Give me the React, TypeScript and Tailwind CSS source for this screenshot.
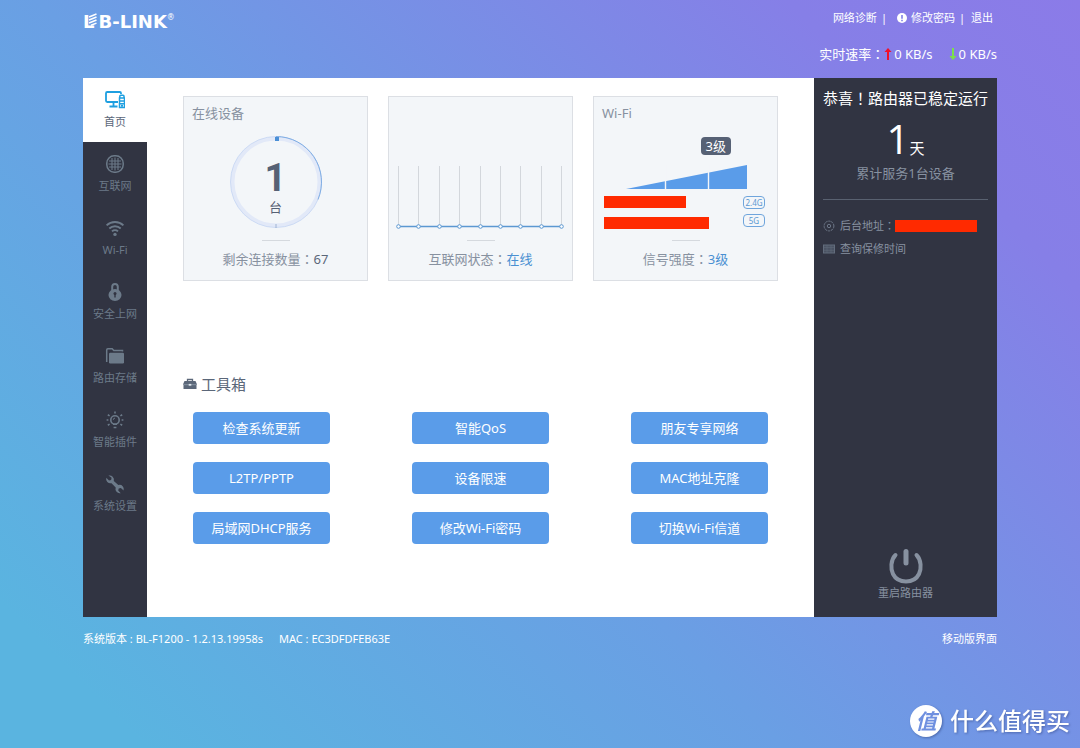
import type { ReactNode } from 'react';

interface NavItem {
  label: string;
  icon: ReactNode;
}

const HomeIcon = () => (
  <svg className="w-5 h-5" viewBox="0 0 20 20" fill="none" stroke="currentColor" strokeWidth="1.8">
    <path d="M13 12H2.200A1.200 1.200 0 0 1 1 10.800V3.200A1.200 1.200 0 0 1 2.200 2h12.600A1.200 1.200 0 0 1 16 3.200V4" />
    <path d="M8.500 12v4M4.500 16.500h8" />
    <path d="M14.800 8V6.300c0-.6.400-1 1-1h2.200c.6 0 1 .4 1 1V8M14.500 8h5v9.500h-5zM14.500 11h5M14.500 13.800h5" strokeWidth="1.500" />
    <path d="M16 15.700h2" strokeWidth="2" />
  </svg>
);

const GlobeIcon = () => (
  <svg className="w-5 h-5" viewBox="0 0 20 20" fill="none" stroke="currentColor">
    <rect x="1.800" y="1.800" width="16.400" height="16.400" rx="7.400" strokeWidth="1.500" />
    <path d="M7 4v12M10 3.500v13M13 4v12M4 7h12M3.500 10h13M4 13h12" strokeWidth="1.100" />
  </svg>
);

const WifiIcon = () => (
  <svg className="w-5 h-5" viewBox="0 0 20 20" fill="none" stroke="currentColor" strokeWidth="1.900">
    <path d="M1.600 7.400a12.200 12.200 0 0 1 16.800 0M4.300 10.500a8.300 8.300 0 0 1 11.400 0M7 13.400a4.400 4.400 0 0 1 6 0" />
    <circle cx="10" cy="16.400" r="1.700" fill="currentColor" stroke="none" />
  </svg>
);

const LockIcon = () => (
  <svg className="w-5 h-5" viewBox="0 0 20 20" fill="none" stroke="currentColor">
    <path d="M7.200 9V4.800a2.800 2.800 0 0 1 5.600 0V9" strokeWidth="2" />
    <ellipse cx="10" cy="13" rx="6.500" ry="6" fill="currentColor" stroke="none" />
    <path d="M10 12v3.600" stroke="#313442" strokeWidth="1.400" />
    <circle cx="10" cy="11.600" r="1.500" fill="#313442" stroke="none" />
  </svg>
);

const FolderIcon = () => (
  <svg className="w-5 h-5" viewBox="0 0 20 20" fill="none" stroke="currentColor">
    <path d="M1.700 16V4c0-.8.500-1.200 1.200-1.200h4.300L8.800 4.500h8.700v1" strokeWidth="1.500" />
    <rect x="4" y="6.700" width="15" height="10.800" rx="1.200" fill="currentColor" stroke="none" />
  </svg>
);

const BulbIcon = () => (
  <svg className="w-5 h-5" viewBox="0 0 20 20" fill="none" stroke="currentColor" strokeWidth="1.600">
    <circle cx="10" cy="10" r="4.200" />
    <path d="M8 14.200h4M8.600 17.500h2.800M10 1.500v2M2.800 4.800l1.800 1.100M17.200 4.800l-1.800 1.100M1.600 10h1.800M16.600 10h1.800M2.800 15.200l1.800-1.100M17.200 15.200l-1.800-1.100" />
    <path d="M8.300 9.800a1.700 1.700 0 0 1 1.700-1.700" strokeWidth="1" />
  </svg>
);

const WrenchIcon = () => (
  <svg className="w-5 h-5" viewBox="0 0 20 20" fill="currentColor">
    <path d="M3.400 1.600a4.300 4.300 0 0 1 5.400 5.300l4.500 4.200a4.200 4.200 0 0 1 5.300 5.400l-2.700-2.600-2.200.5-.5 2.200 2.500 2.600a4.300 4.300 0 0 1-5-5.600L6.500 9.200A4.300 4.300 0 0 1 1.300 3.800L4 6.500l2.100-.6.500-2.100z" />
  </svg>
);

const BriefcaseIcon = () => (
  <svg className="w-3.5 h-3.5" viewBox="0 0 14 14" fill="none">
    <path d="M4.500 4V2.500h5V4" stroke="#5b6779" strokeWidth="1.300" />
    <path d="M1.500 4h11L14 7.500H0z" fill="#5b6779" />
    <rect x=".5" y="7" width="13" height="5" fill="#5b6779" />
    <path d="M1 7.700h12" stroke="#9aa5b4" strokeWidth=".7" />
    <rect x="5.700" y="6.900" width="2.600" height="1.800" fill="#dfe5ec" />
  </svg>
);

const GearIcon = () => (
  <svg className="w-3 h-3" viewBox="0 0 12 12" fill="none" stroke="#6d7788">
    <circle cx="6" cy="6" r="4.900" strokeDasharray="2.400 .7" />
    <circle cx="6" cy="6" r="1.700" />
  </svg>
);

const CalendarIcon = () => (
  <svg className="w-3 h-3" viewBox="0 0 12 12" fill="none" stroke="#626c7c">
    <rect x=".5" y="2" width="11" height="8" fill="#4b5363" />
    <path d="M1 4.500h10M1 7.300h10M4 2v8M8 2v8" strokeWidth=".5" />
  </svg>
);

const PowerIcon = () => (
  <svg className="w-9 h-9" viewBox="0 0 36 36" fill="none" stroke="currentColor" strokeWidth="4" strokeLinecap="round">
    <path d="M18 3.500v11.500" strokeWidth="5" />
    <path d="M7.500 7C2.500 12 2.500 21 5 26s7 7.500 13 7.500 10.500-2.500 13-7.500 2.500-14-2.500-19" />
  </svg>
);

const navItems: NavItem[] = [
  { label: '首页', icon: <HomeIcon /> },
  { label: '互联网', icon: <GlobeIcon /> },
  { label: 'Wi-Fi', icon: <WifiIcon /> },
  { label: '安全上网', icon: <LockIcon /> },
  { label: '路由存储', icon: <FolderIcon /> },
  { label: '智能插件', icon: <BulbIcon /> },
  { label: '系统设置', icon: <WrenchIcon /> },
];

const tools = [
  '检查系统更新', '智能QoS', '朋友专享网络',
  'L2TP/PPTP', '设备限速', 'MAC地址克隆',
  '局域网DHCP服务', '修改Wi-Fi密码', '切换Wi-Fi信道',
];

// x of every sample on the traffic chart
const samples = [10, 30, 51, 71, 92, 112, 132, 153, 173];

// Centred full-width punctuation
const Mark = ({ children }: { children: string }) => (
  <span className="font-['Noto_Sans_CJK_TC',sans-serif]">{children}</span>
);

const Arrow = ({ down }: { down?: boolean }) => (
  <svg className={down ? 'w-2 h-3 rotate-180 text-[#7be04a]' : 'w-2 h-3 text-[#f0102a]'} viewBox="0 0 8 12">
    <path d="M4 0l3.500 4H5v8H3V4H.5z" fill="currentColor" />
  </svg>
);

function Card({ title, footer, children }: { title?: string; footer: ReactNode; children: ReactNode }) {
  return (
    <section className="flex-1 h-[185px] border border-[#dcdfe4] bg-[#f3f6f9]">
      <h2 className="h-8 pl-2 pt-1 text-[13px] leading-6 text-[#8791a0]">{title}</h2>
      <div className="flow-root h-[111px]">{children}</div>
      <div className="w-7 h-px mx-auto bg-[#d5d9de]" />
      <p className="pt-2 text-center text-[13px] leading-5 text-[#8791a0]">{footer}</p>
    </section>
  );
}

function Header() {
  return (
    <header className="flex justify-between h-[78px] text-white">
      <div className="relative flex h-6 mt-2.5 items-center font-['DejaVu_Sans',sans-serif] text-[18px] leading-6 font-bold">
        <span className="pr-1">L</span>
        <svg className="absolute left-[5px] top-0.5 w-2.5 h-4" viewBox="0 0 10 16" fill="none" stroke="#fff" strokeWidth="1.500">
          <path d="M1 5 8.500 2M1 8l7.500-3M1 11l7.500-3M3 13.300l5.500-2.200" />
        </svg>
        <span>B-LINK</span>
        <span className="self-start text-[8px] leading-4 font-normal">®</span>
      </div>
      <div className="flex flex-col items-end pt-2">
        <nav className="flex items-center pr-1 text-[11px] leading-5">
          <a href="#diagnose">网络诊断</a>
          <span className="pl-1">|</span>
          <svg className="w-2.5 h-2.5 ml-2.5 mr-1" viewBox="0 0 10 10">
            <circle cx="5" cy="5" r="5" fill="#fff" />
            <path d="M5 2v3.800M5 6.800v1.400" stroke="#7f80e6" strokeWidth="1.600" />
          </svg>
          <a href="#password">修改密码</a>
          <span className="pl-1 pr-1.5">|</span>
          <a href="#logout">退出</a>
        </nav>
        <div className="flex items-center mt-4 text-[13px] leading-5">
          <span>实时速率<Mark>：</Mark></span>
          <Arrow />
          <span className="ml-0.5 mr-4">0 KB/s</span>
          <Arrow down />
          <span className="ml-0.5">0 KB/s</span>
        </div>
      </div>
    </header>
  );
}

function Sidebar() {
  return (
    <nav className="w-16 shrink-0 bg-[#313442]">
      {navItems.map((item, idx) => (
        <a
          key={item.label}
          href={`#${idx}`}
          className={`flex flex-col items-center h-16 pt-3 text-[11px] leading-4 ${
            idx === 0 ? 'bg-white' : 'text-[#6c7a89]'
          }`}
        >
          <span className={idx === 0 ? 'text-[#1e9fe0]' : ''}>{item.icon}</span>
          <span className={idx === 0 ? 'mt-1 text-[#5b6779]' : 'mt-1'}>{item.label}</span>
        </a>
      ))}
    </nav>
  );
}

function DeviceCard() {
  return (
    <Card title="在线设备" footer={<>剩余连接数量<Mark>：</Mark><span className="text-[#5b6779]">67</span></>}>
      <div className="relative w-24 h-24 mx-auto mt-1 pt-6 text-center text-[#566175]">
        <svg className="absolute inset-0 w-24 h-24" viewBox="0 0 96 96" fill="none">
          <circle cx="48" cy="49" r="43.500" stroke="#e2e9f8" strokeWidth="4" />
          <circle cx="48" cy="49" r="45.500" stroke="#c5d5f2" strokeWidth=".8" />
          <path d="M48 3.500a45.500 45.500 0 0 1 42 63" stroke="#7fade4" strokeWidth="1" />
          <rect x="47" y="4" width="4" height="4" fill="#4a8fd6" />
          <path d="M48 91v4" stroke="#8fa6c9" strokeWidth=".8" />
        </svg>
        <div className="font-['Roboto',sans-serif] text-[38px] leading-[42px] font-bold">1</div>
        <div className="text-[13px] leading-4">台</div>
      </div>
    </Card>
  );
}

function TrafficCard() {
  return (
    <Card footer={<>互联网状态<Mark>：</Mark><span className="text-[#4a90d2]">在线</span></>}>
      <svg className="w-full h-full" viewBox="0 0 183 111" fill="none">
        {samples.map((x) => (
          <path key={x} d={`M${x - 0.5} 37v60`} stroke="#d3d7dc" />
        ))}
        <path d="M10 97.500h163" stroke="#5b98d2" strokeWidth="1.300" />
        {samples.map((x) => (
          <circle key={x} cx={x - 0.5} cy="97.500" r="1.800" fill="#fff" stroke="#5b98d2" />
        ))}
      </svg>
    </Card>
  );
}

function WifiCard() {
  return (
    <Card title="Wi-Fi" footer={<>信号强度<Mark>：</Mark><span className="text-[#4a90d2]">3级</span></>}>
      <div className="flex flex-col pt-2 pl-2.5 pr-3">
        <span className="self-end mr-[34px] px-[5px] rounded bg-[#566175] text-[13px] leading-[18px] text-white">3级</span>
        <svg className="self-end w-[122px] h-6 mt-2.5 mr-[18px]" viewBox="0 0 122 24">
          <path d="M1 24 122 0v24z" fill="#5a9ce9" />
          <path d="M40.500 0v24M83.500 0v24" stroke="#f3f6f9" strokeWidth="1.400" />
        </svg>
        <div className="flex items-center justify-between h-[18px] mt-1">
          <div className="w-[82px] h-3 bg-[#ff2a00]" />
          <span className="w-[22px] rounded border border-[#6fa5dc] text-center text-[8px] leading-[11px] text-[#5b98d2]">2.4G</span>
        </div>
        <div className="flex items-center justify-between h-[18px]">
          <div className="self-end w-[105px] h-3 bg-[#ff2a00]" />
          <span className="w-[22px] rounded border border-[#6fa5dc] text-center text-[8px] leading-[11px] text-[#5b98d2]">5G</span>
        </div>
      </div>
    </Card>
  );
}

function StatusPanel() {
  return (
    <aside className="flex flex-col w-[183px] shrink-0 px-[9px] bg-[#313442] text-[#8791a0]">
      <h2 className="mt-2 text-center whitespace-nowrap text-[15px] leading-6 text-white">
        恭喜<Mark>！</Mark>路由器已稳定运行
      </h2>
      <p className="flex items-baseline justify-center mt-2 text-white">
        <span className="font-['Open_Sans',sans-serif] text-[40px] leading-[42px]">1</span>
        <span className="text-[15px] leading-4">天</span>
      </p>
      <p className="mt-px text-center text-[13px] leading-6">累计服务1台设备</p>
      <hr className="mt-3.5 border-[#596170]" />
      <ul className="mt-3.5 text-[11px] leading-[23px]">
        <li className="flex items-center">
          <GearIcon />
          <span className="ml-[5px]">后台地址<Mark>：</Mark></span>
          <span className="w-[82px] h-3 bg-[#ff2a00]" />
        </li>
        <li className="flex items-center">
          <CalendarIcon />
          <a href="#warranty" className="ml-[5px]">查询保修时间</a>
        </li>
      </ul>
      <button className="flex flex-col items-center self-center mt-auto mb-4 text-[11px] leading-4">
        <PowerIcon />
        <span className="mt-px">重启路由器</span>
      </button>
    </aside>
  );
}

export default function App() {
  return (
    <div className="relative min-h-screen overflow-hidden bg-[linear-gradient(45deg,#5ab4e0_8%,#6a9fe4_43%,#867fe7_84%,#8b7be8)] font-['Noto_Sans','Noto_Sans_CJK_SC',sans-serif]">
      <div className="w-full max-w-[914px] mx-auto">
        <Header />
        <div className="flex min-h-[539px] bg-white">
          <Sidebar />
          <main className="flex-1 px-9 pt-[18px]">
            <div className="flex gap-5">
              <DeviceCard />
              <TrafficCard />
              <WifiCard />
            </div>
            <h2 className="flex items-center gap-1 mt-[91px] text-[15px] leading-6 text-[#5b6779]">
              <BriefcaseIcon />
              工具箱
            </h2>
            <div className="grid grid-cols-[repeat(3,137px)] justify-between gap-y-[18px] mt-4 px-2.5">
              {tools.map((tool) => (
                <button key={tool} className="h-8 rounded bg-[#5a9ce9] text-[13px] leading-5 text-white">
                  {tool}
                </button>
              ))}
            </div>
          </main>
          <StatusPanel />
        </div>
        <footer className="flex justify-between pt-3 text-[11px] leading-5 text-white">
          <div className="flex gap-4">
            <span>系统版本 : BL-F1200 - 1.2.13.19958s</span>
            <span>MAC : EC3DFDFEB63E</span>
          </div>
          <a href="#mobile">移动版界面</a>
        </footer>
      </div>

      {/* Site mark */}
      <div className="absolute right-2.5 bottom-[11px] flex items-center gap-2 text-white drop-shadow-[1px_1px_1px_rgba(40,60,120,0.5)]">
        <span className="w-8 h-8 rounded-full bg-white text-center text-[21px] leading-8 font-bold italic text-[#6f90e0]">值</span>
        <span className="text-2xl leading-8 font-medium">什么值得买</span>
      </div>
    </div>
  );
}
